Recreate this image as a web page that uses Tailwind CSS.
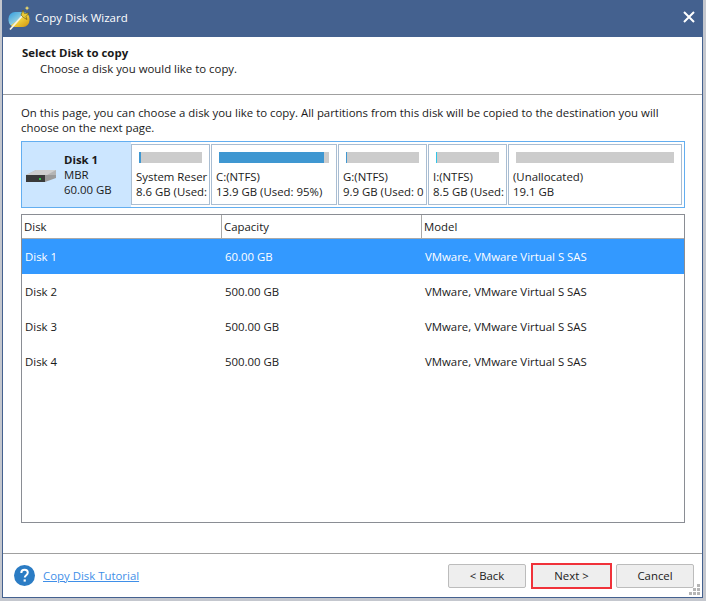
<!DOCTYPE html>
<html lang="en">
<head>
    <meta charset="UTF-8">
    <meta name="viewport" content="width=device-width, initial-scale=1.0">
    <title>Copy Disk Wizard</title>
    <script src="https://cdn.jsdelivr.net/npm/@tailwindcss/browser@4"></script>
</head>
<body class="bg-[#c4c7ce] h-[601px] w-[706px] overflow-hidden font-['Open_Sans','Liberation_Sans',sans-serif] text-[11.4px] text-[#1a1a1a]">
    <div class="ml-[2px] w-[701px] h-[598px] bg-white border border-[#44618f] flex flex-col">
        <!-- title bar -->
        <div class="h-[37px] -mt-px bg-[#44618f] flex items-center pl-[5px] pr-[7px] shrink-0">
            <svg class="w-[22px] h-[24px] shrink-0 mb-[1px]" viewBox="0 0 22 24">
                <defs>
                    <linearGradient id="orb" x1="0" y1="0" x2="1" y2="1">
                        <stop offset="0" stop-color="#2f9be0"/>
                        <stop offset="0.48" stop-color="#8ccbe0"/>
                        <stop offset="0.52" stop-color="#f2d23c"/>
                        <stop offset="1" stop-color="#d2920f"/>
                    </linearGradient>
                </defs>
                <rect x="0.5" y="6" width="21" height="15" rx="6.5" fill="url(#orb)"/>
                <path d="M2 23.5L15 9" stroke="#f5f2e2" stroke-width="1.8"/>
                <path d="M13 9l2-5 1.5 3.5 4.5-.5-3 3.5 1 3-3.5-2z" fill="#e6c838" stroke="#5f5212" stroke-width="0.6"/>
                <path d="M19 0l.8 1.6 1.7.4-1.7.8-.8 1.7-.7-1.7-1.7-.8 1.7-.4z" fill="#f5df6a"/>
            </svg>
            <span class="ml-[5px] mb-[2px] text-white text-[11.5px]">Copy Disk Wizard</span>
            <svg class="w-[12px] h-[12px] ml-auto mb-[3px]" viewBox="0 0 12 12" stroke="white" stroke-width="2"><path d="M1 1l10 10M11 1L1 11"/></svg>
        </div>

        <!-- heading -->
        <div class="h-[58px] shrink-0 border-b border-[#a0a0a0] pl-[19px] pt-[8px]">
            <p class="font-bold leading-[16px]">Select Disk to copy</p>
            <p class="pl-[18px] leading-[16px]">Choose a disk you would like to copy.</p>
        </div>

        <!-- body -->
        <div class="flex-1 pl-[18px] pr-[17px] pt-[10px] flex flex-col">
            <p class="leading-[15px]">On this page, you can choose a disk you like to copy. All partitions from this disk will be copied to the destination you will choose on the next page.</p>

            <div class="mt-[6px] h-[67px] border border-[#63aef0] flex">
                <div class="w-[109px] bg-[#cce6ff] flex items-center pl-[3px] shrink-0">
                    <svg class="w-[32px] h-[14px] mt-[3px]" viewBox="0 0 32 14">
                        <path d="M1 6L11 1H31V7L14 13H1z" fill="#b4b4b4"/>
                        <path d="M1 6L11 1H31L22 6z" fill="#cfcfcf"/>
                        <path d="M1 6H20V13H1z" fill="#3a3a3a"/>
                        <path d="M20 6H31V9L20 13z" fill="#9a9a9a"/>
                        <rect x="14" y="9" width="2" height="2" fill="#35c24a"/>
                    </svg>
                    <div class="ml-[7px] leading-[15px] mb-[1px]">
                        <p class="font-bold">Disk 1</p>
                        <p>MBR</p>
                        <p>60.00 GB</p>
                    </div>
                </div>
                <div class="flex gap-px pt-[2px]">
                    <div class="w-[79px] h-[61px] border border-[#a9bdd2] pt-[7px] pl-[4px] overflow-hidden whitespace-nowrap">
                        <div class="w-[63px] h-[11px] ml-[3px] bg-[#cccccc]"><div class="w-[2px] h-full bg-[#3f97d1]"></div></div>
                        <p class="mt-[6px] leading-[15px]">System Reser</p>
                        <p class="leading-[15px]">8.6 GB (Used:</p>
                    </div>
                    <div class="w-[126px] h-[61px] border border-[#a9bdd2] pt-[7px] pl-[4px] overflow-hidden whitespace-nowrap">
                        <div class="w-[110px] h-[11px] ml-[3px] bg-[#cccccc]"><div class="w-[105px] h-full bg-[#3f97d1]"></div></div>
                        <p class="mt-[6px] leading-[15px]">C:(NTFS)</p>
                        <p class="leading-[15px]">13.9 GB (Used: 95%)</p>
                    </div>
                    <div class="w-[89px] h-[61px] border border-[#a9bdd2] pt-[7px] pl-[4px] overflow-hidden whitespace-nowrap">
                        <div class="w-[73px] h-[11px] ml-[3px] bg-[#cccccc]"><div class="w-px h-full bg-[#3f97d1]"></div></div>
                        <p class="mt-[6px] leading-[15px]">G:(NTFS)</p>
                        <p class="leading-[15px]">9.9 GB (Used: 0</p>
                    </div>
                    <div class="w-[79px] h-[61px] border border-[#a9bdd2] pt-[7px] pl-[4px] overflow-hidden whitespace-nowrap">
                        <div class="w-[63px] h-[11px] ml-[3px] bg-[#cccccc]"><div class="w-px h-full bg-[#2fc4e8]"></div></div>
                        <p class="mt-[6px] leading-[15px]">I:(NTFS)</p>
                        <p class="leading-[15px]">8.5 GB (Used:</p>
                    </div>
                    <div class="w-[174px] h-[61px] border border-[#a9bdd2] pt-[7px] pl-[4px] overflow-hidden whitespace-nowrap">
                        <div class="w-[158px] h-[11px] ml-[3px] bg-[#cccccc]"></div>
                        <p class="mt-[6px] leading-[15px]">(Unallocated)</p>
                        <p class="leading-[15px]">19.1 GB</p>
                    </div>
                </div>
            </div>

            <!-- disk table -->
            <div class="mt-[6px] h-[309px] border border-[#8a8d94]">
                <div class="flex h-[24px] items-center border-b border-[#a9a9a9]">
                    <div class="w-[200px] pl-[2px] leading-[23px] border-r border-[#a9a9a9]">Disk</div>
                    <div class="w-[200px] pl-[2px] leading-[23px] border-r border-[#a9a9a9]">Capacity</div>
                    <div class="pl-[2px]">Model</div>
                </div>
                <div class="flex h-[35px] items-center pt-px bg-[#3399ff] text-white">
                    <div class="w-[200px] pl-[3px]">Disk 1</div>
                    <div class="w-[200px] pl-[3px]">60.00 GB</div>
                    <div class="pl-[3px]">VMware, VMware Virtual S SAS</div>
                </div>
                <div class="flex h-[35px] items-center pt-px">
                    <div class="w-[200px] pl-[3px]">Disk 2</div>
                    <div class="w-[200px] pl-[3px]">500.00 GB</div>
                    <div class="pl-[3px]">VMware, VMware Virtual S SAS</div>
                </div>
                <div class="flex h-[35px] items-center pt-px">
                    <div class="w-[200px] pl-[3px]">Disk 3</div>
                    <div class="w-[200px] pl-[3px]">500.00 GB</div>
                    <div class="pl-[3px]">VMware, VMware Virtual S SAS</div>
                </div>
                <div class="flex h-[35px] items-center pt-px">
                    <div class="w-[200px] pl-[3px]">Disk 4</div>
                    <div class="w-[200px] pl-[3px]">500.00 GB</div>
                    <div class="pl-[3px]">VMware, VMware Virtual S SAS</div>
                </div>
            </div>
        </div>

        <!-- footer -->
        <div class="relative h-[44px] shrink-0 border-t border-[#a0a0a0] flex items-center pl-[11px] pr-[8px]">
            <svg class="w-[21px] h-[21px] shrink-0" viewBox="0 0 21 21">
                <circle cx="10.5" cy="10.5" r="10.5" fill="#2b7cc4"/>
                <path d="M7.3 8c0-2 1.4-3.2 3.3-3.2s3.2 1.1 3.2 2.8c0 2.6-3 2.6-3 5" fill="none" stroke="white" stroke-width="2"/>
                <rect x="9.6" y="14.4" width="2.2" height="2.2" fill="white"/>
            </svg>
            <a class="ml-[8px] text-[#3f8fe8] underline">Copy Disk Tutorial</a>
            <div class="ml-auto flex gap-[4px] items-center mt-px">
                <button class="w-[78px] h-[24px] mr-px bg-[#eeeeee] border border-[#bcbcbc] rounded-[2px]">&lt; Back</button>
                <button class="w-[81px] h-[26px] bg-[#eeeeee] border-2 border-[#f0323a]">Next &gt;</button>
                <button class="w-[78px] h-[24px] bg-[#eeeeee] border border-[#bcbcbc] rounded-[2px]">Cancel</button>
            </div>
            <svg class="absolute right-px bottom-px w-[12px] h-[12px]" viewBox="0 0 12 12" fill="#b5b5b5">
                <rect x="8" y="0" width="3" height="3"/><rect x="4" y="4" width="3" height="3"/><rect x="8" y="4" width="3" height="3"/><rect x="0" y="8" width="3" height="3"/><rect x="4" y="8" width="3" height="3"/><rect x="8" y="8" width="3" height="3"/>
            </svg>
        </div>
    </div>
</body>
</html>
